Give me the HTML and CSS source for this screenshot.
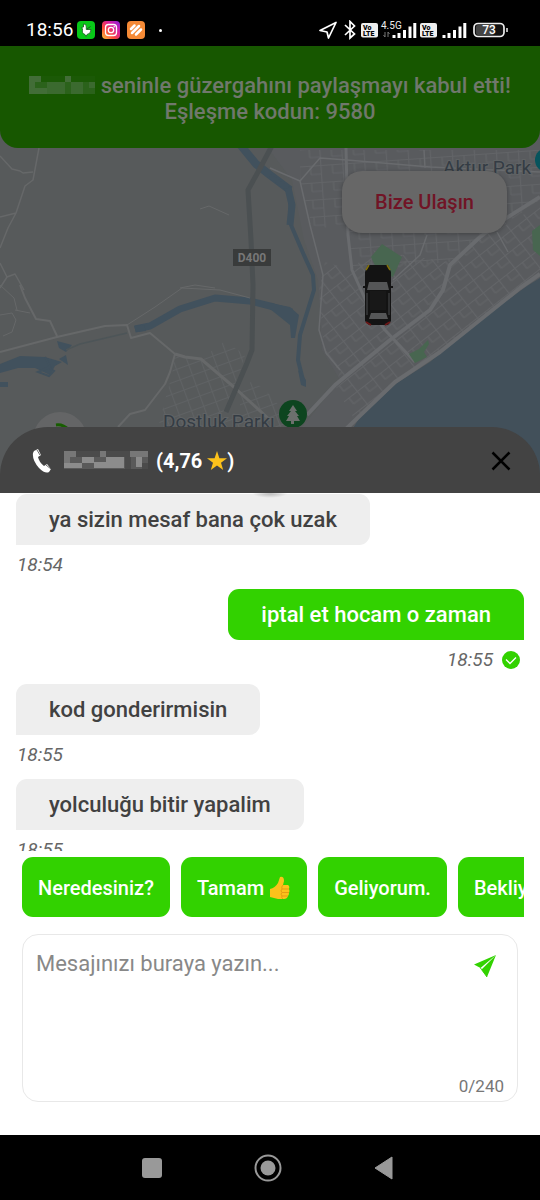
FILE: index.html
```html
<!DOCTYPE html>
<html lang="tr">

<head>
  <meta charset="UTF-8">
  <meta name="viewport" content="width=device-width, initial-scale=1.0">
  <title>Yolculuk Mesajları</title>
  <link rel="stylesheet" href="styles.css">
</head>

<body>
  <div class="app">
    <!-- Status bar -->
    <header class="status-bar">
      <div class="status-left">
        <span class="clock">18:56</span>
        <svg class="app-icon" viewBox="0 0 18 18">
          <rect width="18" height="18" rx="4" fill="#08c818"/>
          <path d="M6.500 3Q9.500 2.500 9.300 6V8.500H14Q14 13 10 13.500L9 15.500 8 13.500Q4.500 12.500 5.500 8L4.500 6.500 6.500 6Z" fill="#fff" stroke="#165a1c" stroke-width=".8"/>
          <path d="M10 8L13.500 5.500" stroke="#165a1c" stroke-width="1"/>
        </svg>
        <svg class="app-icon" viewBox="0 0 18 18">
          <defs>
            <linearGradient id="insta" x1="0" y1="1" x2="1" y2="0">
              <stop offset="0" stop-color="#ffc83d"/>
              <stop offset=".35" stop-color="#fb4a38"/>
              <stop offset=".65" stop-color="#d81f9c"/>
              <stop offset="1" stop-color="#8a1fe0"/>
            </linearGradient>
          </defs>
          <rect width="18" height="18" rx="4" fill="url(#insta)"/>
          <rect x="3.500" y="3.500" width="11" height="11" rx="3" fill="none" stroke="#fff" stroke-width="1.300"/>
          <circle cx="9" cy="9" r="2.700" fill="none" stroke="#fff" stroke-width="1.300"/>
          <circle cx="12.200" cy="5.800" r=".8" fill="#fff"/>
        </svg>
        <svg class="app-icon" viewBox="0 0 18 18">
          <rect width="18" height="18" rx="4" fill="#f58a36"/>
          <path d="M4 8L7.500 4.500M5 12L12 5M9 13.500L14 8.500" stroke="#fff" stroke-width="2.500" stroke-linecap="round"/>
        </svg>
        <span class="more-dot"></span>
      </div>
      <svg class="status-right" viewBox="319 20 190 20" role="img" aria-label="Bağlantı ve pil durumu">
        <path d="M320 30.500L336 22.500 328.500 38 327 32Z" fill="none" stroke="#fff" stroke-width="1.700" stroke-linejoin="round"/>
        <path d="M345 25L354.500 34 350 38V21.500L354.500 26 345 35" fill="none" stroke="#fff" stroke-width="1.700"/>
        <g id="volte">
          <rect x="361" y="23" width="17" height="14.500" rx="2" fill="#eee"/>
          <text class="volte-text" x="363" y="29.500">Vo</text>
          <text class="volte-text" x="363" y="36">LTE</text>
        </g>
        <text class="network-text" x="381" y="29">4.5G</text>
        <path d="M385 32V37M383.500 35L385 37M388 37V32L389.500 34" fill="none" stroke="#777" stroke-width="1"/>
        <g id="bars">
          <path d="M394 35V38M399 33V38M404.500 30V38M410 26.500V38M414.800 23V38" stroke="#fff" stroke-width="3"/>
        </g>
        <use href="#volte" x="59"/>
        <use href="#bars" x="50"/>
        <rect x="474" y="23.500" width="30" height="13" rx="4" fill="#111" stroke="#eee" stroke-width="1.700"/>
        <rect x="476" y="25" width="18" height="10" rx="2" fill="#444"/>
        <path d="M507 28V32" stroke="#eee" stroke-width="1.500"/>
        <text class="battery-text" x="489" y="34">73</text>
      </svg>
    </header>

    <!-- Map behind the match banner and the sheet header -->
    <section class="map-area">
      <svg class="map" viewBox="0 46 540 447" preserveAspectRatio="xMidYMin slice" role="img" aria-label="Harita">
        <defs>
          <pattern id="streets" width="20" height="16" patternUnits="userSpaceOnUse" patternTransform="rotate(-38)">
            <path d="M0 .5H20M.5 0V16M10 0V8M10 8H20" fill="none" stroke="#636568" stroke-width="1.200"/>
          </pattern>
          <pattern id="streetsNorth" width="22" height="17" patternUnits="userSpaceOnUse" patternTransform="rotate(-4)">
            <path d="M0 .5H22M.5 0V17M12 0V9M12 9H22" fill="none" stroke="#626467" stroke-width="1.200"/>
          </pattern>
          <pattern id="streetsPark" width="13" height="11" patternUnits="userSpaceOnUse" patternTransform="rotate(-20)">
            <path d="M0 .5H13M.5 0V11" fill="none" stroke="#5f6264" stroke-width="1.100"/>
          </pattern>
        </defs>
        <rect y="46" width="540" height="447" fill="#575a5b"/>
        <!-- Built up areas -->
        <path d="M262 140H540V280L430 360 352 430H300L340 380 322 350 318 280 304 240 292 180Z" fill="#595b5e"/>
        <path d="M300 150H540V200L480 235 450 262 352 270 348 230 312 226 300 181Z" fill="url(#streetsNorth)"/>
        <path d="M540 200L480 237 450 265 443 290 430 310 390 340 335 385 340 372 324 352 319 290 325 262 352 270 370 250 450 262Z" fill="url(#streets)"/>
        <path d="M540 205V270L480 320 395 382 355 420 336 388 390 340 432 310 450 268 480 240Z" fill="url(#streets)"/>
        <path d="M175 354L201 359 225 341 245 355 240 372 226 412 270 420 260 440H155L165 400 172 375Z" fill="url(#streetsPark)"/>
        <path d="M253 380L270 395 300 430H240L240 392Z" fill="url(#streetsPark)"/>
        <!-- Sea -->
        <path d="M540 278L527 286 477 322 430 362 397 383 360 417 352 430 345 493H540Z" fill="#42505a"/>
        <!-- Rivers -->
        <g fill="none" stroke="#41515d" stroke-linejoin="round">
          <path d="M238 142L256 164 270 175 290 190" stroke-width="8"/>
          <path d="M270 176L290 190 291 225 303 253 313 275 314 290 300 335 298 360 304 384" stroke-width="4"/>
          <path d="M288 188L292 205 290 225" stroke-width="7"/>
          <path d="M135 329L150 326 180 309 215 298 250 301 274 307 292 312" stroke-width="7"/>
        </g>
        <path d="M270 303L290 307 299 315 295 338 291 338 290 325 270 309ZM134 326L144 325 146 331 136 332ZM298 370L306 380 306 387 301 385ZM0 364L20 356 45 357 62 362 55 366 50 375 35 368 18 368 0 373ZM57 341L72 345 66 352 59 348ZM59 359L66 355 68 365ZM0 382H8V387H0Z" fill="#41515d"/>
        <path d="M45 357L50 367 38 372 49 376 54 371 48 367" fill="none" stroke="#41515d" stroke-width="2"/>
        <path d="M66 350L80 344 127 333" fill="none" stroke="#4d5558" stroke-width="1.500"/>
        <!-- Country roads -->
        <g fill="none" stroke="#666869" stroke-width="2" stroke-linejoin="round">
          <path d="M0 156L12 169 20 171 23 173 33 172M39 148L33 180 25 186 16 213 8 228 0 248M0 217L16 213M0 263L7 277 15 274 24 290M0 288L7 277" stroke-width="1.500"/>
          <path d="M20 285L25 298 36 319 50 321 57 336M0 352L57 337 105 326 127 325 131 338 150 333 175 354M175 354L170 372 165 384 145 410 130 414 118 427"/>
          <path d="M127 325L155 307 182 288 220 290 250 298M15 310L30 313M0 315L12 313 16 320 12 332 3 336M0 285L14 298 17 310M200 209L209 206 229 215M180 288L195 285 215 288" stroke-width="1"/>
          <path d="M175 354L185 357 201 359 235 388 270 420" stroke-width="3"/>
        </g>
        <!-- City roads -->
        <g fill="none" stroke="#696b6e" stroke-width="3" stroke-linejoin="round">
          <path d="M307 415L335 385 390 340 430 310 443 290 450 265 480 237 500 222 540 197" stroke-width="4"/>
          <path d="M346 148L348 235 352 270 370 310 385 330 415 362"/>
          <path d="M345 430L395 382 440 352 480 320 520 288 540 274" stroke-width="4"/>
          <path d="M270 168L300 181 320 158 347 160 430 167 540 172M300 181L310 225 323 275 319 330 326 353 340 370M427 235L420 255 393 280M424 150L425 168M497 232L508 252" stroke-width="1.500"/>
        </g>
        <path d="M274 142L258 172 248 190 251 240 253 285 252 350 247 363 226 412" fill="none" stroke="#4b5052" stroke-width="5"/>
        <!-- Parks -->
        <path d="M371 257L382 244 402 257 393 277 377 270ZM409 354L419 349 428 340 429 344 424 352 427 357 415 363ZM540 225L532 231 533 250 540 256Z" fill="#486650"/>
        <text class="map-label" x="443" y="174">Aktur Park</text>
        <circle cx="547" cy="160" r="12" fill="#07545d"/>
        <rect x="233" y="249" width="38" height="17" fill="#393b3b"/>
        <text class="road-label" x="252" y="262">D400</text>
        <!-- Car -->
        <path d="M368 265H388L391 272V321L388 325H369L365 321V272Z" fill="#131313"/>
        <path d="M369 265L366 270M387 265L390 270" stroke="#82700b" stroke-width="1.500"/>
        <path d="M369 282H387L389 290H367ZM371 313H386L388 319H369Z" fill="#555657"/>
        <path d="M370 291H386V310H370Z" fill="#181818"/>
        <path d="M367 293V315M389 293V315" stroke="#4b4d4e"/>
        <path d="M363 287H367M389 287H393" stroke="#131313" stroke-width="2"/>
        <path d="M366 322L371 325M390 322L385 325" stroke="#6a1717" stroke-width="2"/>
        <text class="map-label" x="163" y="428">Dostluk Parkı</text>
        <circle cx="293" cy="414" r="14" fill="#0d451f"/>
        <path d="M293 405L297 411H295L299 416H297L300 421H294V424H291V421H286L289 416H287L291 411H289Z" fill="#6c706d"/>
        <circle cx="60" cy="439" r="27" fill="#646566"/>
        <path d="M56 425Q63 424 69 430" fill="none" stroke="#175e00" stroke-width="3"/>
      </svg>

      <div class="match-banner">
        <p>
          <svg class="hidden-name" viewBox="0 0 66 18" role="img" aria-label="Gizli isim">
            <rect width="66" height="18" fill="#2b621b"/>
            <path d="M0 0H12V6H0ZM0 6H6V12H0ZM0 12H18V18H0ZM36 0H42V6H36Z" fill="#426d37"/>
            <path d="M18 6H36V18H18ZM42 6H54V18H42ZM60 6H66V12H60Z" fill="#3b6a2f"/>
            <path d="M12 0H36V6H12ZM42 0H66V6H42Z" fill="#1b5906"/>
          </svg>
          seninle güzergahını paylaşmayı kabul etti!
        </p>
        <p>Eşleşme kodun: 9580</p>
      </div>

      <button class="contact-button" type="button">Bize Ulaşın</button>

      <div class="sheet-header">
        <button class="icon-button" type="button" aria-label="Ara">
          <svg class="phone-icon" viewBox="0 0 20 24">
            <path d="M2 2L6 0 9 6 6 8Q7 13 12 17L15 15 19 20 17 23Q13 25 7 19 0 11 1 4Z" fill="#fff"/>
            <path d="M5 1L8 6M14 16L19 20" stroke="#434343" stroke-width=".8"/>
          </svg>
        </button>
        <svg class="driver-name" viewBox="0 0 84 24" role="img" aria-label="Gizli isim">
          <rect y="3" width="84" height="17" fill="#5a5a5a"/>
          <path d="M0 2H12V8H0ZM0 8H6V14H0ZM36 2H42V8H36ZM66 2H84V8H66Z" fill="#777"/>
          <path d="M0 14H18V19H0ZM18 8H30V14H18ZM42 8H60V19H42ZM30 13H42V19H30ZM72 8H78V18H72Z" fill="#8c8c8c"/>
          <path d="M12 2H36V8H12ZM42 2H66V8H42ZM61 8H67V20H61ZM78 14H84V20H78Z" fill="#4b4b4b"/>
        </svg>
        <span class="rating">(4,76
          <svg class="star-icon" viewBox="0 0 20 20">
            <path d="M10 0L12.400 7.200H20L14 11.700 16.200 19 10 14.600 3.800 19 6 11.700 0 7.200H7.600Z" fill="#fcc21b"/>
          </svg>)</span>
        <button class="icon-button close-button" type="button" aria-label="Kapat">
          <svg class="close-icon" viewBox="0 0 20 20">
            <path d="M1.500 1.500L18.500 18.500M18.500 1.500L1.500 18.500" stroke="#000" stroke-width="2.500"/>
          </svg>
        </button>
      </div>
    </section>

    <!-- Messages -->
    <main class="messages">
      <div class="message">
        <p class="bubble">ya sizin mesaf bana çok uzak</p>
        <div class="meta"><time>18:54</time></div>
      </div>
      <div class="message own">
        <p class="bubble">iptal et hocam o zaman</p>
        <div class="meta">
          <time>18:55</time>
          <svg class="read-icon" viewBox="0 0 18 18" role="img" aria-label="İletildi">
            <circle cx="9" cy="9" r="9" fill="#32d200"/>
            <path d="M4 8.500L8 12.500 14 6.500" fill="none" stroke="#fff" stroke-width="1.300"/>
          </svg>
        </div>
      </div>
      <div class="message">
        <p class="bubble">kod gonderirmisin</p>
        <div class="meta"><time>18:55</time></div>
      </div>
      <div class="message">
        <p class="bubble">yolculuğu bitir yapalim</p>
        <div class="meta"><time>18:55</time></div>
      </div>
    </main>

    <!-- Quick replies -->
    <div class="quick-replies">
      <button class="chip" type="button">Neredesiniz?</button>
      <button class="chip" type="button">Tamam
        <svg class="thumb-icon" viewBox="0 0 22 24">
          <path d="M1 13Q6 12 9 7L11 1Q15 0 15 5L14 9H19Q21 10 20 13 21 15 20 17 20 19 19 20 18 23 15 23H9Q5 22 1 21Z" fill="#fcc21b"/>
          <path d="M13 13H20M13 16.500H20M13 20H19M14 9Q12 11 13 13 11 15 13 16.500 11 18 13 20 12 22 14 23" fill="none" stroke="#e89b12" stroke-width="1"/>
        </svg>
      </button>
      <button class="chip" type="button">Geliyorum.</button>
      <button class="chip" type="button">Bekliyorum.</button>
    </div>

    <!-- Message form -->
    <form class="composer">
      <label class="visually-hidden" for="messageText">Mesaj</label>
      <textarea id="messageText" maxlength="240" placeholder="Mesajınızı buraya yazın..."></textarea>
      <div class="composer-side">
        <button class="icon-button" type="submit" aria-label="Gönder">
          <svg class="send-icon" viewBox="0 0 24 24">
            <path d="M23 1L1 10.500 7.500 14ZM23 1L8.500 15.500 14 23Z" fill="#32d200"/>
            <path d="M7.500 14L8.500 15.500 14 23" fill="none" stroke="#32d200" stroke-width="1"/>
          </svg>
        </button>
        <span class="counter">0/240</span>
      </div>
    </form>

    <!-- Android navigation -->
    <nav class="nav-bar">
      <button class="icon-button" type="button" aria-label="Son uygulamalar">
        <svg class="nav-icon" viewBox="0 0 28 28"><rect x="4" y="4" width="20" height="20" rx="3" fill="#999"/></svg>
      </button>
      <button class="icon-button" type="button" aria-label="Ana ekran">
        <svg class="nav-icon" viewBox="0 0 28 28">
          <circle cx="14" cy="14" r="12.500" fill="none" stroke="#999" stroke-width="2"/>
          <circle cx="14" cy="14" r="7.500" fill="#999"/>
        </svg>
      </button>
      <button class="icon-button" type="button" aria-label="Geri">
        <svg class="nav-icon" viewBox="0 0 28 28"><path d="M5 14L22 3V25Z" fill="#999" stroke="#999" stroke-linejoin="round"/></svg>
      </button>
    </nav>
  </div>
</body>

</html>
```
FILE: styles.css
```css
* {
  box-sizing: border-box;
}

body {
  font-family: Roboto, 'Noto Sans', sans-serif;
  margin: 0;
  background-color: #fff;
  color: #414141;
}

p {
  margin: 0;
}

svg {
  display: block;
  flex: none;
}

button {
  font: inherit;
  border: none;
  padding: 0;
  cursor: pointer;
}

.app {
  display: flex;
  flex-direction: column;
  height: 100vh;
}

/* Status bar */
.status-bar {
  display: flex;
  justify-content: space-between;
  align-items: center;
  flex: none;
  padding: 18px 31px 4px 26px;
  background-color: #000;
  color: #fff;
}

.status-left {
  display: flex;
  align-items: center;
  gap: 7px;
}

.clock {
  font-size: 19px;
  line-height: 24px;
  margin-right: -3px;
}

.app-icon {
  width: 18px;
  height: 18px;
}

.more-dot {
  width: 3px;
  height: 3px;
  margin-left: 7px;
  border-radius: 50%;
  background-color: #fff;
}

.status-right {
  width: 190px;
  height: 20px;
}

.volte-text {
  font-size: 7px;
  font-weight: 900;
  fill: #000;
}

.network-text {
  font-size: 10px;
  fill: #eee;
}

.battery-text {
  font-size: 12px;
  font-weight: 500;
  text-anchor: middle;
  fill: #fff;
}

/* Map */
.map-area {
  position: relative;
  display: flex;
  flex-direction: column;
  flex: none;
  min-height: 447px;
}

.map {
  position: absolute;
  top: 0;
  left: 0;
  width: 100%;
  height: 100%;
}

.map-label {
  font-size: 19px;
  fill: #343c44;
  stroke: #606365;
  stroke-width: 2px;
  paint-order: stroke;
}

.road-label {
  font-size: 12px;
  font-weight: 700;
  text-anchor: middle;
  fill: #777;
}

.match-banner {
  position: relative;
  padding: 27px 16px 23px;
  border-radius: 0 0 18px 18px;
  background-color: #175700;
  color: #70786c;
  font-size: 22px;
  font-weight: 500;
  line-height: 26px;
  text-align: center;
}

.hidden-name {
  display: inline-block;
  width: 66px;
  height: 18px;
  vertical-align: -1px;
}

.contact-button {
  position: relative;
  align-self: flex-end;
  margin: 23px 33px 0 0;
  padding: 18px 33px;
  border-radius: 20px;
  background-color: #676767;
  color: #711426;
  font-size: 20px;
  font-weight: 500;
  line-height: 26px;
  box-shadow: 0 1px 4px rgba(0, 0, 0, 0.3);
}

/* Sheet header */
.sheet-header {
  position: relative;
  display: flex;
  align-items: center;
  margin-top: auto;
  height: 66px;
  padding: 2px 29px 0 32px;
  border-radius: 48px 48px 0 0;
  background-color: #434343;
  color: #fff;
}

.sheet-header::after {
  content: "";
  position: absolute;
  top: 100%;
  left: 50%;
  width: 36px;
  height: 5px;
  margin-left: -18px;
  z-index: 1;
  background: radial-gradient(ellipse at top, rgba(0, 0, 0, 0.25), transparent 70%);
}

.icon-button {
  background: none;
}

.phone-icon {
  width: 20px;
  height: 24px;
}

.driver-name {
  width: 84px;
  height: 24px;
  margin: 0 8px 0 12px;
}

.rating {
  display: flex;
  align-items: center;
  gap: 5px;
  font-size: 20px;
  font-weight: 700;
}

.star-icon {
  width: 20px;
  height: 20px;
  margin-right: -5px;
}

.close-button {
  margin-left: auto;
}

.close-icon {
  width: 20px;
  height: 20px;
}

/* Messages */
.messages {
  flex: 1;
  min-height: 0;
  padding: 1px 16px 0;
  overflow: hidden;
}

.message {
  display: flex;
  flex-direction: column;
  align-items: flex-start;
  margin-bottom: 12px;
}

.bubble {
  padding: 13px 33px 12px;
  border-radius: 11px 11px 11px 0;
  background-color: #eee;
  font-size: 22px;
  font-weight: 500;
  line-height: 26px;
}

.meta {
  display: flex;
  align-items: center;
  gap: 9px;
  margin-top: 8px;
  padding-left: 1px;
  color: #666;
  font-size: 19px;
  font-style: italic;
  line-height: 24px;
}

.read-icon {
  width: 18px;
  height: 18px;
}

.own {
  align-items: flex-end;
}

.own .bubble {
  border-radius: 11px 11px 0 11px;
  background-color: #32d200;
  color: #fff;
}

.own .meta {
  padding-right: 4px;
}

/* Quick replies */
.quick-replies {
  display: flex;
  flex: none;
  gap: 11px;
  margin: 6px 16px 0;
  padding-left: 6px;
  overflow: hidden;
}

.chip {
  display: flex;
  align-items: center;
  gap: 5px;
  flex: none;
  height: 60px;
  padding: 2px 16px 0;
  border-radius: 11px;
  background-color: #32d200;
  color: #fff;
  font-size: 20px;
  font-weight: 500;
}

.thumb-icon {
  width: 22px;
  height: 24px;
}

/* Message form */
.composer {
  display: flex;
  flex: none;
  min-height: 168px;
  margin: 17px 22px 33px;
  padding: 16px 13px 3px;
  border: 1px solid #e8e8e8;
  border-radius: 16px;
}

.composer textarea {
  flex: 1;
  min-width: 0;
  padding: 0;
  border: none;
  outline: none;
  resize: none;
  background: none;
  color: #414141;
  font-family: inherit;
  font-size: 22px;
  line-height: 26px;
}

.composer textarea::placeholder {
  color: #888;
}

.composer-side {
  display: flex;
  flex-direction: column;
  justify-content: space-between;
  align-items: flex-end;
}

.composer-side .icon-button {
  padding: 3px 7px 0 0;
}

.send-icon {
  width: 24px;
  height: 24px;
}

.counter {
  color: #777;
  font-size: 17px;
  line-height: 24px;
}

.visually-hidden {
  position: absolute;
  width: 1px;
  height: 1px;
  overflow: hidden;
  clip-path: inset(50%);
}

/* Android navigation */
.nav-bar {
  display: flex;
  justify-content: center;
  align-items: center;
  gap: 88px;
  flex: none;
  height: 65px;
  padding-right: 4px;
  background-color: #000;
}

.nav-icon {
  width: 28px;
  height: 28px;
}
```
